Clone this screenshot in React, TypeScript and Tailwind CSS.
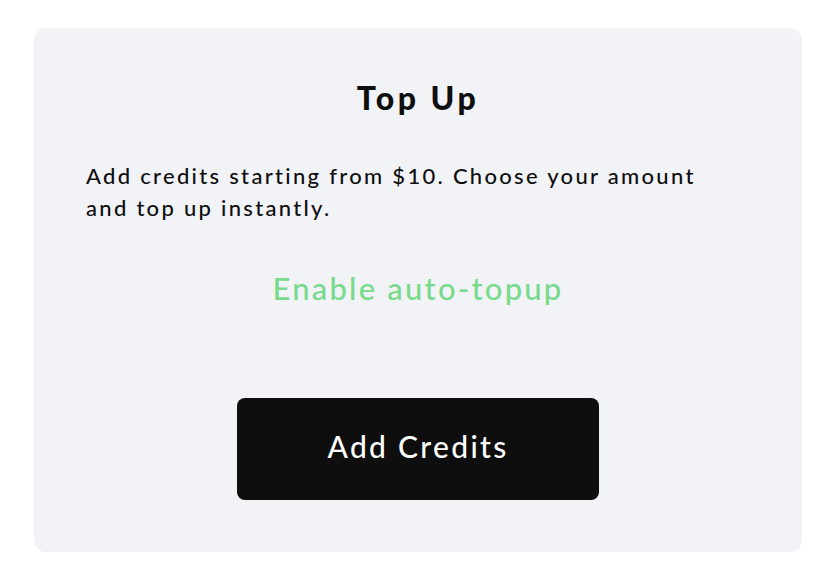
import React from "react";

function TopUpCard() {
  return (
    <div className="flex flex-col items-center rounded-xl bg-[#f2f3f7] px-[52px] pb-[52px] pt-[50px]">
      <h2 className="text-[32px] font-black leading-[40px] tracking-[3.5px] text-[#0e0e0e]">Top Up</h2>
      <p className="mt-[42px] w-full max-w-[640px] self-start text-[22px] font-medium leading-[32px] tracking-[2.3px] text-[#0e0e0e]">
        Add credits starting from $10. Choose your amount and top up instantly.
      </p>
      <button className="mt-[44px] text-[31px] font-medium leading-[40px] tracking-[2.2px] text-[#78da8b]">
        Enable auto-topup
      </button>
      <button className="mt-[90px] flex h-[102px] w-[362px] items-center justify-center rounded-lg bg-[#0e0e0e] pb-[6px] text-[30px] font-medium tracking-[2.3px] text-white">
        Add Credits
      </button>
    </div>
  );
}

export default function App() {
  return (
    <div
      className="min-h-[584px] bg-white px-[28px] pt-[28px]"
      style={{ fontFamily: "Lato, 'Noto Sans', sans-serif" }}
    >
      <div className="ml-[6px] w-[768px]">
        <TopUpCard />
      </div>
    </div>
  );
}
